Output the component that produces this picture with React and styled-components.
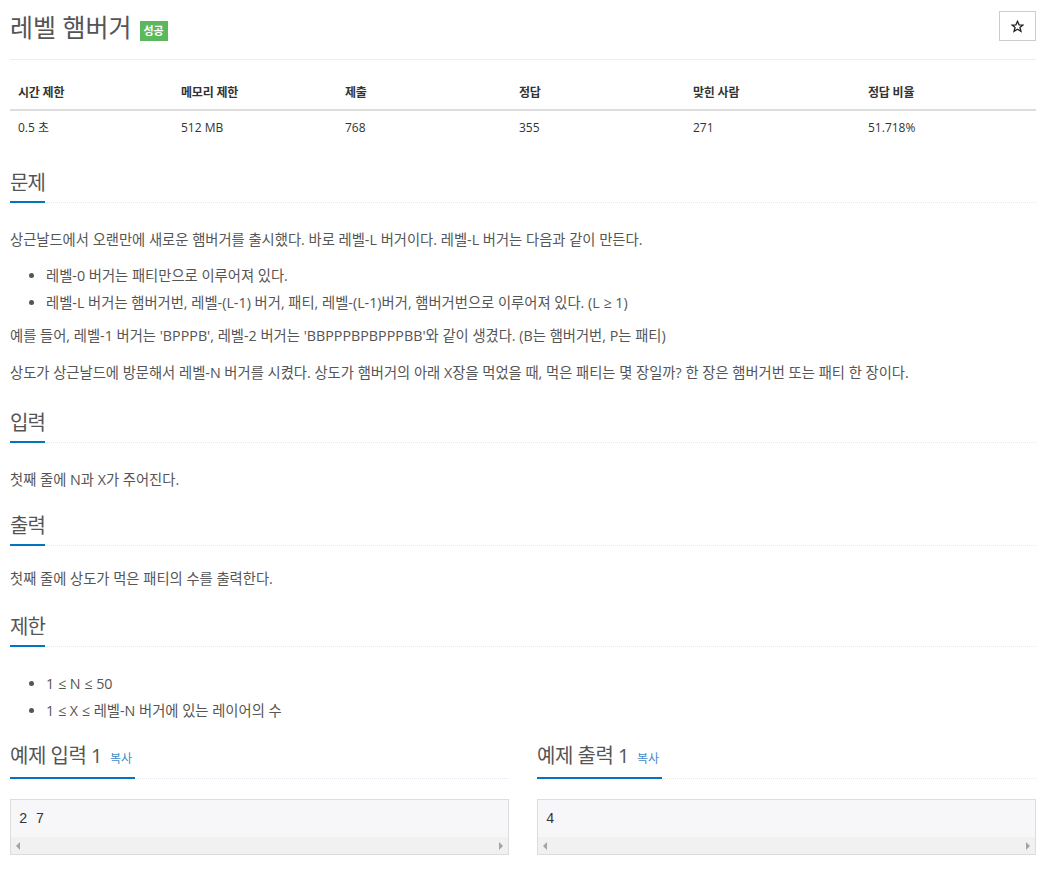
import React from "react";
import styled, { createGlobalStyle } from "styled-components";

const Global = createGlobalStyle`
  html, body { margin: 0; padding: 0; background: #fff; }
  body {
    font-family: "Open Sans", "Noto Sans CJK KR", sans-serif;
    font-size: 14.3px;
    color: #555;
  }
  * { box-sizing: border-box; }
`;

const Page = styled.div`
  width: 1026px;
  margin-left: 10px;
  padding-bottom: 20px;
`;

const Header = styled.div`
  display: flex;
  justify-content: space-between;
  align-items: flex-start;
  height: 60px;
  padding-top: 10px;
  border-bottom: 1px solid #eee;
`;

const TitleRow = styled.div`
  display: flex;
  align-items: center;
  gap: 8px;
`;

const Title = styled.h1`
  margin: 0;
  font-size: 25px;
  line-height: 34px;
  font-weight: 400;
  color: #555;
`;

const Badge = styled.span`
  display: inline-block;
  margin-top: 8px;
  background: #5cb85c;
  color: #fff;
  font-size: 11px;
  font-weight: 700;
  line-height: 20px;
  height: 20px;
  padding: 0 4px;
`;

const StarButton = styled.button`
  margin-top: 1px;
  width: 37px;
  height: 30px;
  border: 1px solid #ccc;
  background: #fff;
  display: flex;
  align-items: center;
  justify-content: center;
  padding: 0;
  cursor: pointer;
`;

const InfoTable = styled.table`
  width: 100%;
  margin-top: 16px;
  border-collapse: collapse;
  font-size: 12px;
  color: #333;
`;

const Th = styled.th`
  text-align: left;
  font-weight: 700;
  padding: 8px;
  line-height: 17px;
  border-bottom: 2px solid #ddd;
  width: ${(p) => p.$w}px;
  letter-spacing: -0.2px;
`;

const Td = styled.td`
  padding: 8px;
  line-height: 17px;
`;

const Section = styled.section`
  margin-top: ${(p) => p.$mt}px;
`;

const Headline = styled.div`
  display: flex;
  border-bottom: 1px dotted #e4e9f0;
  margin-bottom: ${(p) => p.$mb ?? 26}px;
`;

const H2 = styled.h2`
  margin: 0 0 -1px;
  font-size: 20px;
  line-height: 28px;
  font-weight: 400;
  color: #555;
  padding-bottom: 4px;
  border-bottom: 2px solid #0076c0;
  letter-spacing: ${(p) => p.$ls ?? -1}px;
`;

const CopyLink = styled.a`
  font-size: 12px;
  color: #428bca;
  margin-left: 8px;
  letter-spacing: 0;
  padding-right: 3px;
  text-decoration: none;
`;

const P = styled.p`
  margin: 0 0 ${(p) => p.$mb ?? 15}px;
  line-height: 22px;
`;

const List = styled.ul`
  margin: 0 0 ${(p) => p.$mb ?? 0}px;
  padding-left: 36px;
`;

const Item = styled.li`
  line-height: 22px;
  & + & { margin-top: 5px; }
`;

const SampleGrid = styled.div`
  display: grid;
  grid-template-columns: 1fr 1fr;
  column-gap: 28px;
`;

const SampleBox = styled.div`
  border: 1px solid #ddd;
  background: #f7f7f9;
`;

const Pre = styled.pre`
  margin: 0;
  padding: 9px 8px 8px;
  font-family: "Liberation Mono", "DejaVu Sans Mono", monospace;
  font-size: 14px;
  line-height: 20px;
  color: #333;
`;

const ScrollBar = styled.div`
  height: 17px;
  background: #f1f1f1;
  display: flex;
  justify-content: space-between;
  align-items: center;
  padding: 0 5px;
`;

const Arrow = styled.span`
  width: 0;
  height: 0;
  border-top: 4px solid transparent;
  border-bottom: 4px solid transparent;
  ${(p) =>
    p.$dir === "left"
      ? "border-right: 4px solid #a3a3a3;"
      : "border-left: 4px solid #a3a3a3;"}
`;

const Star = () => (
  <svg width="13" height="13" viewBox="0 0 24 24" fill="none" stroke="#222" strokeWidth="2.4" strokeLinejoin="miter">
    <polygon points="12,2.5 14.9,9 22,9.3 16.5,13.9 18.4,21 12,17 5.6,21 7.5,13.9 2,9.3 9.1,9" />
  </svg>
);

const cols = [
  { h: "시간 제한", v: "0.5 초", w: 163 },
  { h: "메모리 제한", v: "512 MB", w: 164 },
  { h: "제출", v: "768", w: 174 },
  { h: "정답", v: "355", w: 174 },
  { h: "맞힌 사람", v: "271", w: 175 },
  { h: "정답 비율", v: "51.718%", w: 176 },
];

const Sample = ({ title, value }) => (
  <div>
    <Headline $mb={20}>
      <H2 $ls={-0.5}>
        {title}
        <CopyLink href="#">복사</CopyLink>
      </H2>
    </Headline>
    <SampleBox>
      <Pre>{value}</Pre>
      <ScrollBar>
        <Arrow $dir="left" />
        <Arrow $dir="right" />
      </ScrollBar>
    </SampleBox>
  </div>
);

export default function App() {
  return (
    <Page>
      <Global />
      <Header>
        <TitleRow>
          <Title>레벨 햄버거</Title>
          <Badge>성공</Badge>
        </TitleRow>
        <StarButton aria-label="즐겨찾기">
          <Star />
        </StarButton>
      </Header>

      <InfoTable>
        <thead>
          <tr>
            {cols.map((c) => (
              <Th key={c.h} $w={c.w}>{c.h}</Th>
            ))}
          </tr>
        </thead>
        <tbody>
          <tr>
            {cols.map((c) => (
              <Td key={c.h}>{c.v}</Td>
            ))}
          </tr>
        </tbody>
      </InfoTable>

      <Section $mt={25}>
        <Headline>
          <H2>문제</H2>
        </Headline>
        <P $mb={14}>상근날드에서 오랜만에 새로운 햄버거를 출시했다. 바로 레벨-L 버거이다. 레벨-L 버거는 다음과 같이 만든다.</P>
        <List $mb={11}>
          <Item>레벨-0 버거는 패티만으로 이루어져 있다.</Item>
          <Item>레벨-L 버거는 햄버거번, 레벨-(L-1) 버거, 패티, 레벨-(L-1)버거, 햄버거번으로 이루어져 있다. (L ≥ 1)</Item>
        </List>
        <P>예를 들어, 레벨-1 버거는 'BPPPB', 레벨-2 버거는 'BBPPPBPBPPPBB'와 같이 생겼다. (B는 햄버거번, P는 패티)</P>
        <P $mb={0}>상도가 상근날드에 방문해서 레벨-N 버거를 시켰다. 상도가 햄버거의 아래 X장을 먹었을 때, 먹은 패티는 몇 장일까? 한 장은 햄버거번 또는 패티 한 장이다.</P>
      </Section>

      <Section $mt={25}>
        <Headline>
          <H2>입력</H2>
        </Headline>
        <P $mb={0}>첫째 줄에 N과 X가 주어진다.</P>
      </Section>

      <Section $mt={21}>
        <Headline $mb={22}>
          <H2>출력</H2>
        </Headline>
        <P $mb={0}>첫째 줄에 상도가 먹은 패티의 수를 출력한다.</P>
      </Section>

      <Section $mt={23}>
        <Headline>
          <H2>제한</H2>
        </Headline>
        <List>
          <Item>1 ≤ N ≤ 50</Item>
          <Item>1 ≤ X ≤ 레벨-N 버거에 있는 레이어의 수</Item>
        </List>
      </Section>

      <Section $mt={20}>
        <SampleGrid>
          <Sample title="예제 입력 1" value="2 7" />
          <Sample title="예제 출력 1" value="4" />
        </SampleGrid>
      </Section>
    </Page>
  );
}
